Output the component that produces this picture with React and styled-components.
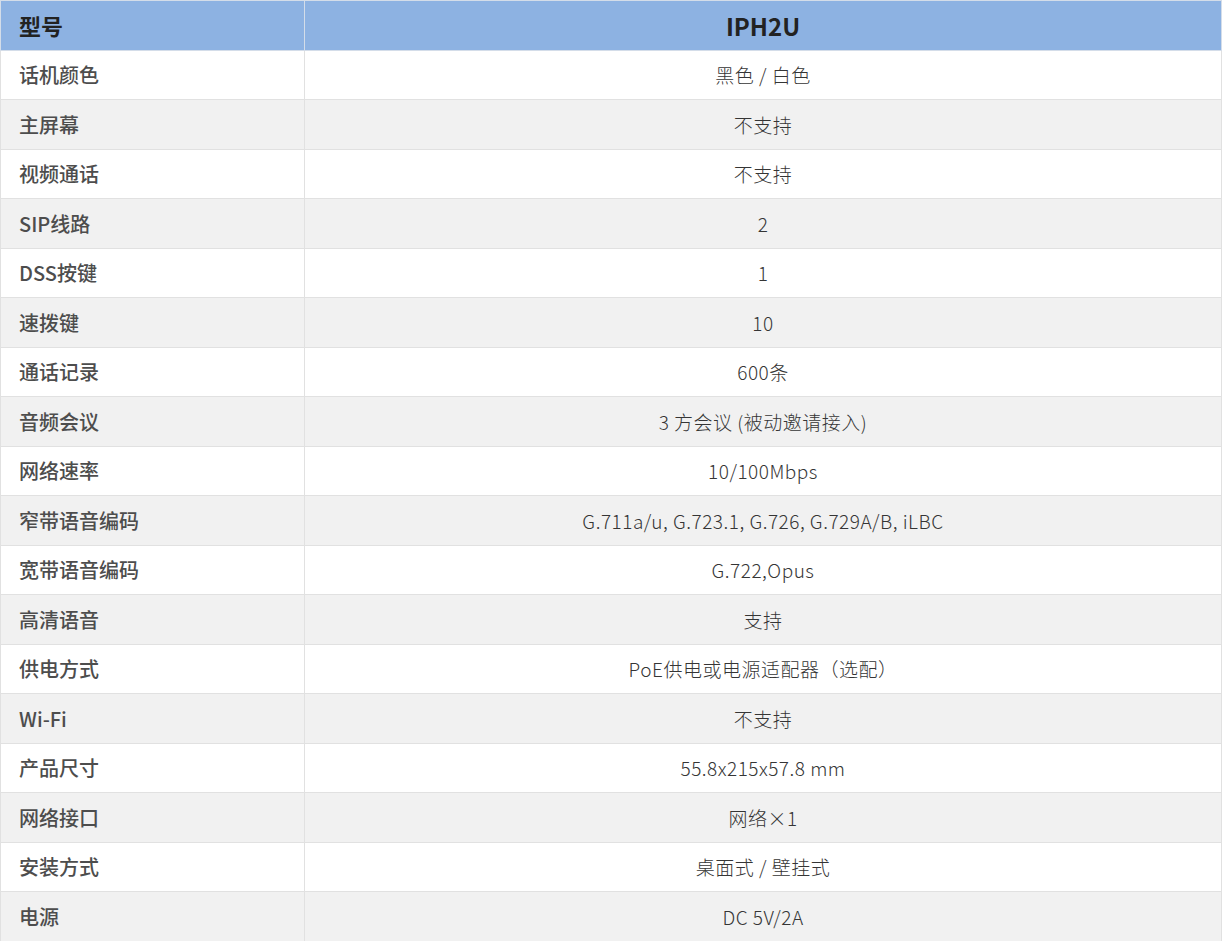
import React from "react";
import styled, { createGlobalStyle } from "styled-components";

const GlobalStyle = createGlobalStyle`
  html, body {
    margin: 0;
    padding: 0;
    background: #fff;
  }
  body {
    font-family: "Noto Sans CJK SC", "Noto Sans", sans-serif;
  }
`;

const specs = [
  ["话机颜色", "黑色 / 白色"],
  ["主屏幕", "不支持"],
  ["视频通话", "不支持"],
  ["SIP线路", "2"],
  ["DSS按键", "1"],
  ["速拨键", "10"],
  ["通话记录", "600条"],
  ["音频会议", "3 方会议 (被动邀请接入)"],
  ["网络速率", "10/100Mbps"],
  ["窄带语音编码", "G.711a/u, G.723.1, G.726, G.729A/B, iLBC"],
  ["宽带语音编码", "G.722,Opus"],
  ["高清语音", "支持"],
  ["供电方式", "PoE供电或电源适配器（选配）"],
  ["Wi-Fi", "不支持"],
  ["产品尺寸", "55.8x215x57.8 mm"],
  ["网络接口", "网络×1"],
  ["安装方式", "桌面式 / 壁挂式"],
  ["电源", "DC 5V/2A"],
];

const App = () => {
  return (
    <>
      <GlobalStyle />
      <SpecTable>
        <colgroup>
          <col style={{ width: 304 }} />
          <col />
        </colgroup>
        <thead>
          <HeadRow>
            <LabelHead>型号</LabelHead>
            <ValueHead>IPH2U</ValueHead>
          </HeadRow>
        </thead>
        <tbody>
          {specs.map(([label, value], i) => (
            <Row key={label} $striped={i % 2 === 1}>
              <LabelCell>{label}</LabelCell>
              <ValueCell>{value}</ValueCell>
            </Row>
          ))}
        </tbody>
      </SpecTable>
    </>
  );
};

const SpecTable = styled.table`
  width: 1222px;
  border-collapse: collapse;
  table-layout: fixed;
  border: 1px solid #d9d9d9;
  th,
  td {
    border: 1px solid #e1e1e1;
    padding: 0;
    height: 48.5px;
    vertical-align: middle;
  }
`;

const HeadRow = styled.tr`
  background: #8db2e2;
  th {
    border-color: #d4dde9;
  }
`;

const LabelHead = styled.th`
  text-align: left;
  padding-left: 18px !important;
  font-size: 22px;
  font-weight: 700;
  color: #222;
`;

const ValueHead = styled.th`
  text-align: center;
  font-size: 24px;
  font-weight: 700;
  color: #222;
`;

const Row = styled.tr`
  background: ${(p) => (p.$striped ? "#f1f1f1" : "#ffffff")};
`;

const LabelCell = styled.td`
  text-align: left;
  padding-left: 18px !important;
  font-size: 20px;
  font-weight: 500;
  color: #4d4d4d;
`;

const ValueCell = styled.td`
  text-align: center;
  font-size: 19px;
  font-weight: 300;
  letter-spacing: 0.5px;
  color: #353535;
`;

export default App;
